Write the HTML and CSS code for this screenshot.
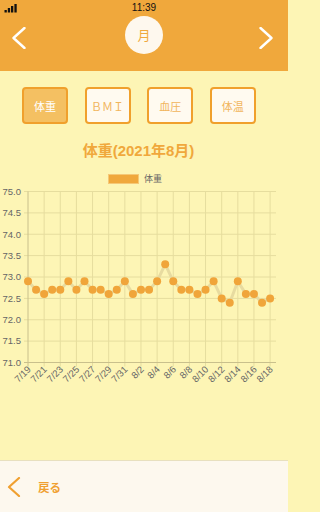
FILE: index.html
```html
<!DOCTYPE html>
<html lang="ja">
<head>
<meta charset="utf-8">
<title>体重</title>
<link rel="stylesheet" href="styles.css">
</head>
<body>
<div class="app">
  <header class="top">
    <div class="status">
      <svg class="signal" width="14" height="10" viewBox="0 0 14 10">
        <rect x="0.5" y="7" width="2.3" height="2.5" fill="#111"/>
        <rect x="3.8" y="5" width="2.3" height="4.5" fill="#111"/>
        <rect x="7" y="3" width="2.3" height="6.5" fill="#111"/>
        <rect x="10.4" y="1" width="2.3" height="8.5" fill="#111"/>
      </svg>
      <span class="time">11:39</span>
      <span></span>
    </div>
    <nav class="nav">
      <svg class="chev chev-left" width="14" height="22" viewBox="0 0 14 22">
        <polyline points="12.5,1 1.5,11 12.5,21" fill="none" stroke="#fff" stroke-width="2.4" stroke-linecap="round" stroke-linejoin="round"/>
      </svg>
      <div class="month">月</div>
      <svg class="chev chev-right" width="14" height="22" viewBox="0 0 14 22">
        <polyline points="1.5,1 12.5,11 1.5,21" fill="none" stroke="#fff" stroke-width="2.4" stroke-linecap="round" stroke-linejoin="round"/>
      </svg>
    </nav>
  </header>

  <main class="content">
    <div class="tabs">
      <button class="tab tab-active">体重</button>
      <button class="tab">ＢＭＩ</button>
      <button class="tab">血圧</button>
      <button class="tab">体温</button>
    </div>
    <h1 class="title">体重(2021年8月)</h1>
    <div class="legend">
      <span class="legend-box"></span>
      <span class="legend-label">体重</span>
    </div>
    <svg class="chart" width="288" height="274" viewBox="0 186 288 274">
      <g class="grid" stroke="#e6dd9e" stroke-width="1">
        <line x1="24" x2="276" y1="191.5" y2="191.5"/>
        <line x1="24" x2="276" y1="212.9" y2="212.9"/>
        <line x1="24" x2="276" y1="234.25" y2="234.25"/>
        <line x1="24" x2="276" y1="255.6" y2="255.6"/>
        <line x1="24" x2="276" y1="277" y2="277"/>
        <line x1="24" x2="276" y1="298.4" y2="298.4"/>
        <line x1="24" x2="276" y1="319.75" y2="319.75"/>
        <line x1="24" x2="276" y1="341.1" y2="341.1"/>
        <line x1="44.14" x2="44.14" y1="191.5" y2="366.5"/>
        <line x1="60.28" x2="60.28" y1="191.5" y2="366.5"/>
        <line x1="76.42" x2="76.42" y1="191.5" y2="366.5"/>
        <line x1="92.56" x2="92.56" y1="191.5" y2="366.5"/>
        <line x1="108.7" x2="108.7" y1="191.5" y2="366.5"/>
        <line x1="124.84" x2="124.84" y1="191.5" y2="366.5"/>
        <line x1="140.98" x2="140.98" y1="191.5" y2="366.5"/>
        <line x1="157.12" x2="157.12" y1="191.5" y2="366.5"/>
        <line x1="173.26" x2="173.26" y1="191.5" y2="366.5"/>
        <line x1="189.4" x2="189.4" y1="191.5" y2="366.5"/>
        <line x1="205.54" x2="205.54" y1="191.5" y2="366.5"/>
        <line x1="221.68" x2="221.68" y1="191.5" y2="366.5"/>
        <line x1="237.82" x2="237.82" y1="191.5" y2="366.5"/>
        <line x1="253.96" x2="253.96" y1="191.5" y2="366.5"/>
        <line x1="270.1" x2="270.1" y1="191.5" y2="366.5"/>
      </g>
      <g class="axis" stroke="#c9c08c" stroke-width="1">
        <line x1="24" x2="276" y1="362.5" y2="362.5"/>
        <line x1="28" x2="28" y1="191.5" y2="366.5"/>
      </g>
      <g class="ylabels" font-size="9.5" fill="#666" text-anchor="end">
        <text x="21" y="194.8">75.0</text>
        <text x="21" y="216.2">74.5</text>
        <text x="21" y="237.5">74.0</text>
        <text x="21" y="258.9">73.5</text>
        <text x="21" y="280.3">73.0</text>
        <text x="21" y="301.7">72.5</text>
        <text x="21" y="323">72.0</text>
        <text x="21" y="344.4">71.5</text>
        <text x="21" y="365.8">71.0</text>
      </g>
      <g class="xlabels" font-size="9.5" fill="#666" text-anchor="end">
        <text transform="translate(31.5,370) rotate(-45)">7/19</text>
        <text transform="translate(47.6,370) rotate(-45)">7/21</text>
        <text transform="translate(63.8,370) rotate(-45)">7/23</text>
        <text transform="translate(79.9,370) rotate(-45)">7/25</text>
        <text transform="translate(96.1,370) rotate(-45)">7/27</text>
        <text transform="translate(112.2,370) rotate(-45)">7/29</text>
        <text transform="translate(128.3,370) rotate(-45)">7/31</text>
        <text transform="translate(144.5,370) rotate(-45)">8/2</text>
        <text transform="translate(160.6,370) rotate(-45)">8/4</text>
        <text transform="translate(176.8,370) rotate(-45)">8/6</text>
        <text transform="translate(192.9,370) rotate(-45)">8/8</text>
        <text transform="translate(209,370) rotate(-45)">8/10</text>
        <text transform="translate(225.2,370) rotate(-45)">8/12</text>
        <text transform="translate(241.3,370) rotate(-45)">8/14</text>
        <text transform="translate(257.5,370) rotate(-45)">8/16</text>
        <text transform="translate(273.6,370) rotate(-45)">8/18</text>
      </g>
      <polyline class="series-line" fill="none" stroke="#e7dba0" stroke-width="3" stroke-linejoin="round"
        points="28,281.3 36.07,289.8 44.14,294.1 52.21,289.8 60.28,289.8 68.35,281.3 76.42,289.8 84.49,281.3 92.56,289.8 100.63,289.8 108.7,294.1 116.77,289.8 124.84,281.3 132.91,294.1 140.98,289.8 149.05,289.8 157.12,281.3 165.19,264.2 173.26,281.3 181.33,289.8 189.4,289.8 197.47,294.1 205.54,289.8 213.61,281.3 221.68,298.4 229.75,302.7 237.82,281.3 245.89,294.1 253.96,294.1 262.03,302.7 270.1,298.4"/>
      <g class="dots" fill="#f0a53a">
        <circle cx="28" cy="281.3" r="4"/>
        <circle cx="36.07" cy="289.8" r="4"/>
        <circle cx="44.14" cy="294.1" r="4"/>
        <circle cx="52.21" cy="289.8" r="4"/>
        <circle cx="60.28" cy="289.8" r="4"/>
        <circle cx="68.35" cy="281.3" r="4"/>
        <circle cx="76.42" cy="289.8" r="4"/>
        <circle cx="84.49" cy="281.3" r="4"/>
        <circle cx="92.56" cy="289.8" r="4"/>
        <circle cx="100.63" cy="289.8" r="4"/>
        <circle cx="108.7" cy="294.1" r="4"/>
        <circle cx="116.77" cy="289.8" r="4"/>
        <circle cx="124.84" cy="281.3" r="4"/>
        <circle cx="132.91" cy="294.1" r="4"/>
        <circle cx="140.98" cy="289.8" r="4"/>
        <circle cx="149.05" cy="289.8" r="4"/>
        <circle cx="157.12" cy="281.3" r="4"/>
        <circle cx="165.19" cy="264.2" r="4"/>
        <circle cx="173.26" cy="281.3" r="4"/>
        <circle cx="181.33" cy="289.8" r="4"/>
        <circle cx="189.4" cy="289.8" r="4"/>
        <circle cx="197.47" cy="294.1" r="4"/>
        <circle cx="205.54" cy="289.8" r="4"/>
        <circle cx="213.61" cy="281.3" r="4"/>
        <circle cx="221.68" cy="298.4" r="4"/>
        <circle cx="229.75" cy="302.7" r="4"/>
        <circle cx="237.82" cy="281.3" r="4"/>
        <circle cx="245.89" cy="294.1" r="4"/>
        <circle cx="253.96" cy="294.1" r="4"/>
        <circle cx="262.03" cy="302.7" r="4"/>
        <circle cx="270.1" cy="298.4" r="4"/>
      </g>
    </svg>
  </main>

  <footer class="bottom">
    <svg class="back-chev" width="14" height="20" viewBox="0 0 14 20">
      <polyline points="12,1 2,10 12,19" fill="none" stroke="#f0a030" stroke-width="2.2" stroke-linecap="round" stroke-linejoin="round"/>
    </svg>
    <span class="back-label">戻る</span>
  </footer>
</div>
</body>
</html>
```

FILE: styles.css
```css
* {
  box-sizing: border-box;
}

html, body {
  margin: 0;
  padding: 0;
}

html {
  background: #fdf5b5;
}

body {
  font-family: "Liberation Sans", "Noto Sans CJK JP", sans-serif;
  background: #fdf5b5;
}

.app {
  width: 288px;
  height: 512px;
  display: flex;
  flex-direction: column;
  overflow: hidden;
  background: #fdf5b5;
}

.top {
  background: #f0a83c;
  height: 71px;
  flex: none;
}

.status {
  height: 15px;
  display: grid;
  grid-template-columns: 1fr auto 1fr;
  align-items: center;
}

.signal {
  display: block;
  margin-left: 4px;
  margin-top: 1px;
}

.time {
  font-size: 10px;
  color: #111;
  line-height: 15px;
}

.nav {
  height: 39px;
  display: grid;
  grid-template-columns: 1fr 38px 1fr;
  align-items: center;
}

.chev {
  display: block;
  margin-top: 6px;
}

.chev-left {
  justify-self: start;
  margin-left: 12px;
}

.chev-right {
  justify-self: end;
  margin-right: 15px;
}

.month {
  width: 38px;
  height: 38px;
  border-radius: 50%;
  background: #fef8ee;
  color: #f0a83c;
  font-size: 13px;
  display: flex;
  align-items: center;
  justify-content: center;
}

.content {
  flex: 1;
  display: flex;
  flex-direction: column;
}

.tabs {
  display: flex;
  padding: 16px 0 0 22px;
  gap: 16.6px;
}

.tab {
  width: 46px;
  height: 37px;
  padding: 0;
  border: 2px solid #f0a02c;
  border-radius: 4px;
  background: #fffaf0;
  color: #f1b55c;
  font-family: "Liberation Sans", "Noto Sans CJK JP", sans-serif;
  font-size: 11px;
  display: flex;
  align-items: center;
  justify-content: center;
}

.tab-active {
  background: #f4c062;
  color: #fff;
}

.title {
  margin: 17px 0 0;
  padding-right: 11px;
  height: 20px;
  line-height: 20px;
  text-align: center;
  font-size: 15px;
  font-weight: bold;
  color: #f0a83c;
}

.legend {
  margin-top: 12.5px;
  height: 10px;
  display: flex;
  align-items: center;
  padding-left: 108px;
  gap: 5px;
}

.legend-box {
  width: 31px;
  height: 10px;
  background: #f0a83c;
  border: 1px solid #f5c877;
}

.legend-label {
  font-size: 9px;
  color: #666;
  line-height: 10px;
}

.chart {
  display: block;
  margin-top: 2px;
  font-family: "Liberation Sans", sans-serif;
}

.bottom {
  flex: none;
  height: 52px;
  border-top: 1px solid #e8e0bf;
  background: #fdf8ee;
  display: flex;
  align-items: center;
  padding-left: 7px;
}

.back-chev {
  display: block;
  margin-top: 1px;
}

.back-label {
  margin-left: 17px;
  font-size: 11.5px;
  font-weight: bold;
  color: #f0a030;
}
```
